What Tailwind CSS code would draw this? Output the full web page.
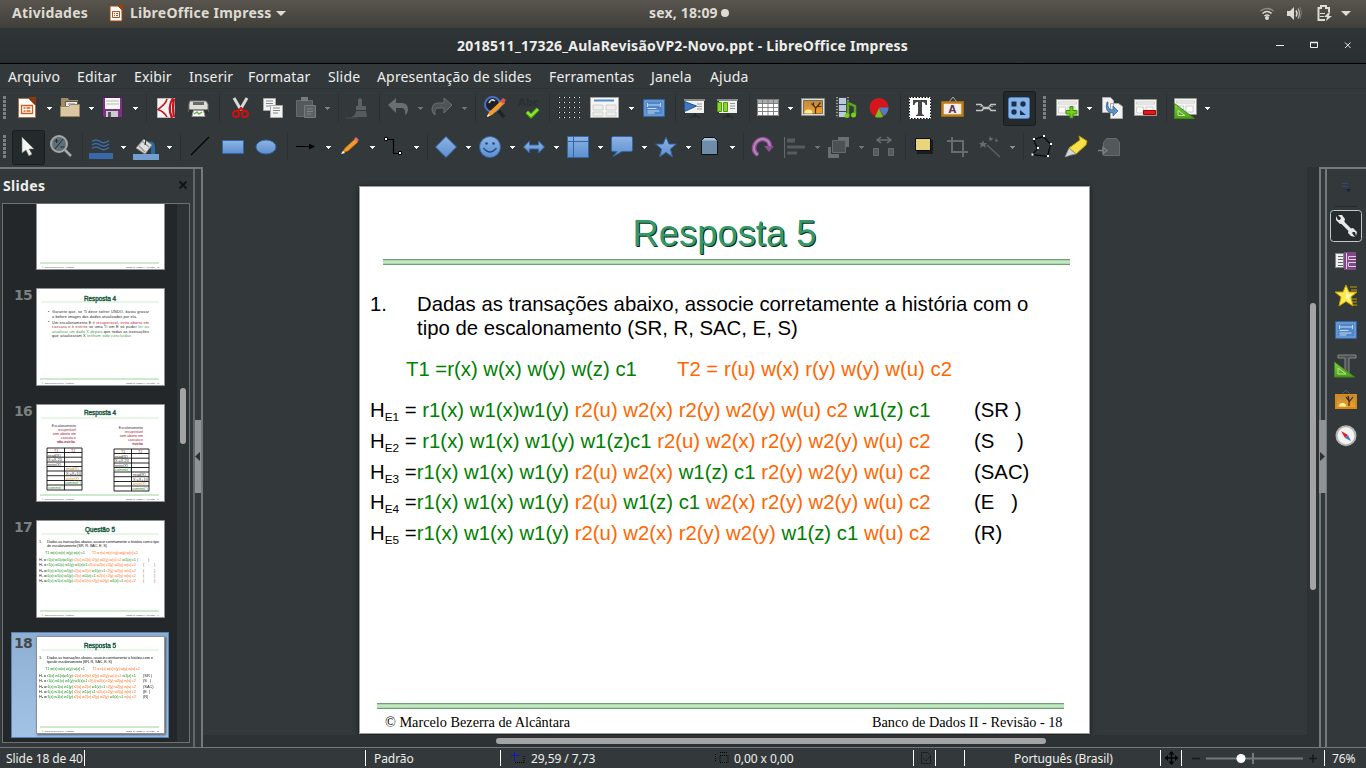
<!DOCTYPE html>
<html lang="pt-BR">
<head>
<meta charset="utf-8">
<title>LibreOffice Impress</title>
<script src="https://cdn.jsdelivr.net/npm/@tailwindcss/browser@4"></script>
</head>
<body class="w-[1366px] h-[768px] overflow-hidden bg-[#33393b] font-['Noto_Sans','Open_Sans',sans-serif] text-[#eeeeec] flex flex-col">

<svg class="absolute w-0 h-0">
  <defs>
    <linearGradient id="bl" x1="0" y1="0" x2="0" y2="1"><stop offset="0" stop-color="#8db4e4"/><stop offset="1" stop-color="#5d8fd0"/></linearGradient>
    <linearGradient id="sky" x1="0" y1="0" x2="0" y2="1"><stop offset="0" stop-color="#b98a4a"/><stop offset="1" stop-color="#f6a21c"/></linearGradient>
    <linearGradient id="gr" x1="0" y1="0" x2="0" y2="1"><stop offset="0" stop-color="#83d04a"/><stop offset="1" stop-color="#4e9a1c"/></linearGradient>
    <path id="ar" d="M0 0h5v1h-1v1h-1v1h-1v-1h-1v-1h-1z"/>
    <path id="grip" fill="#7b8082" d="M0 0h3v3h-3zM0 4h3v3h-3zM0 8h3v3h-3zM0 12h3v3h-3zM0 16h3v3h-3zM0 20h3v3h-3z"/>
    <path id="sep" d="M.5 2v28" stroke="#2b3032"/>
    <g id="page"><path d="M0 0h22v16h-22z" fill="#f4f4f3" stroke="#999b98"/><path d="M2 2.500h18v2h-18zM2 7.500h7v6h-7zM11.500 7.500h7v6h-7z" fill="#fafafa" stroke="#cfd1ce"/></g>
    <g id="tree"><path d="M0 0h23v17h-23z" fill="#ddddd9" stroke="#8b8d88"/><path d="M2 2h19v13h-19z" fill="url(#sky)" stroke="#4a3b26" stroke-width=".6"/><path d="M3 15a4 4 0 0 1 8 0z" fill="#ffee9c"/><path d="M14 15V9L10 5M14 10l5-6M12 7V4M16 8l4 0" stroke="#4a2d12" stroke-width="1.200" fill="none"/></g>
    <g id="dia"><path d="M0 0h21v17h-21z" fill="#4f86c9" stroke="#3465a4"/><path d="M1.500 1.500h18v14h-18z" fill="none" stroke="#85aee0" stroke-width=".8"/><path d="M4 3.500v4m13-4v4M4 5.500h13M4 9h9M4 11.500h12M4 13.500h7" stroke="#d7e5f6" fill="none" stroke-width=".9"/></g>
  </defs>
</svg>

<!-- desktop bar -->
<header class="h-7 shrink-0 bg-linear-to-b from-[#59554e] to-[#403f3a] flex items-center text-[#dfdbd2] text-[14px] font-bold leading-[26px] [&>div]:h-7">
  <div class="w-[108px] pl-3 tracking-[0.25px]">Atividades</div>
  <svg class="w-[22px] h-7 shrink-0" fill="none"><path d="M2 6h8l4 4v11h-12z" fill="#fff" stroke="#a33e03"/><path d="M9 5h6v6z" fill="#a33e03"/><path d="M4.500 11.500h7v6h-7zM6 13.500h1m1 0h2m-4 2h1m1 0h2" stroke="#b8501a"/></svg>
  <div class="w-[146px] tracking-[0.25px] whitespace-nowrap">LibreOffice Impress</div>
  <svg class="w-[373px] h-7 shrink-0" fill="#dfdbd2"><path d="M0 11h10l-5 5z"/></svg>
  <div class="w-[72px] tracking-[0.2px] whitespace-nowrap">sex, 18:09</div>
  <svg class="w-[537px] h-7 shrink-0" fill="#dfdbd2"><circle cx="4" cy="13" r="4"/></svg>
  <svg class="w-[100px] h-7 shrink-0" fill="none"><g stroke="#dfdbd2" stroke-width="1.500"><path d="M2.500 11q6.500-5 13 0" stroke="#8d8a82"/><path d="M4.500 13.500q4.500-4 9 0M6.500 16q2.500-2 5 0"/></g><circle cx="9" cy="18" r="2" fill="#dfdbd2"/>
  <path d="M29 11h3l4-4v13l-4-4h-3z" fill="#dfdbd2"/><path d="M38 10.500q2 3 0 6" stroke="#dfdbd2" stroke-width="1.500"/><path d="M40 8.500q3 5 0 10" stroke="#b5b2aa" stroke-width="1.300"/><path d="M42 7q3 6 0 12" stroke="#7d7a72"/>
  <path d="M67 20h-6.500V8h2.500V6h5v2h3v4" stroke="#dfdbd2" stroke-width="2"/><path d="M62 13.500h5M62 16.500h4" stroke="#dfdbd2"/><path d="M71 12l-5 5h3l-1 4 6-5h-3l1-4z" fill="#dfdbd2"/><path d="M83 11h10l-5 5z" fill="#dfdbd2"/></svg>
</header>

<!-- window title -->
<div class="h-9 shrink-0 bg-linear-to-b from-[#2f3537] to-[#2a2f31] border-b border-black flex items-center">
  <div class="w-[1270px] pl-[457px] text-[14px] font-bold tracking-[0.26px] whitespace-nowrap leading-8">2018511_17326_AulaRevisãoVP2-Novo.ppt - LibreOffice Impress</div>
  <svg class="w-24 h-8 shrink-0" fill="none" stroke="#eeeeec"><path d="M6 15.500h8"/><path d="M40.500 12.500h7v5h-7z"/><path d="M40 12.500h8" stroke-width="1.500"/><path d="M75 12.500l5.500 5.500m0-5.500l-5.500 5.500"/></svg>
</div>

<!-- menu -->
<nav class="h-[25px] shrink-0 border-b border-[#2d3234] pl-2 flex text-[14px] tracking-[0.16px] leading-[26px] whitespace-nowrap">
  <span class="w-[69px]">Arquivo</span><span class="w-[57px]">Editar</span><span class="w-[55px]">Exibir</span><span class="w-[59px]">Inserir</span><span class="w-20">Formatar</span><span class="w-[49px]">Slide</span><span class="w-[172px]">Apresentação de slides</span><span class="w-[102px]">Ferramentas</span><span class="w-[59px]">Janela</span><span>Ajuda</span>
</nav>

<!-- standard toolbar -->
<div class="h-[38px] shrink-0 pt-[3px] flex [&>svg]:h-8 [&>svg]:shrink-0 [&>svg]:overflow-visible [&>svg]:fill-none">
  <svg class="w-4"><use href="#grip" x="3" y="4"/></svg>
  <svg class="w-[42px]"><path d="M2.500 6.500h10l7 7v12h-17z" fill="#fff" stroke="#a9704e"/><path d="M12 5h8v8z" fill="#8a3a0c"/><path d="M5.500 13.500h11v8h-11zM7.500 16h2m1 0h4m-7 3h2m1 0h4" stroke="#d35c17" stroke-width="1.300"/><use href="#ar" x="31" y="15" fill="#fff"/></svg>
  <svg class="w-[42px]"><path d="M3 6h7l1 2h9v10h-17z" fill="#a58b63"/><path d="M7.500 9.500h12v8h-12z" fill="#eee" stroke="#555"/><path d="M10 12h7" stroke="#777"/><path d="M2.500 14.500h8l2-2h9v12h-19z" fill="#d9c6a2" stroke="#9b845c"/><use href="#ar" x="31" y="15" fill="#fff"/></svg>
  <svg class="w-[46px]"><path d="M2.500 5.500h20v20h-18l-2-2z" fill="#75387b" stroke="#4c2055"/><path d="M5 6h15v11h-15z" fill="#f5f5f5"/><path d="M6 9h13m-13 3h13" stroke="#bbb"/><path d="M6 19h12v6h-12z" fill="#ccc"/><path d="M8 20h3v5h-3z" fill="#555"/><use href="#ar" x="33" y="15" fill="#fff"/></svg>
  <svg class="w-[9px]"><use href="#sep"/></svg>
  <svg class="w-8"><path d="M2.500 6.500h17v19h-17z" fill="#f3f3f3" stroke="#bbb"/><path d="M12 7C11 12 6 15 3 17.500C7 19 10 21 12 25" stroke="#c4161c" stroke-width="1.500"/><path d="M18 6Q12 15 17 26M19 7Q17 15 19 25" stroke="#c4161c" stroke-width="2.200"/></svg>
  <svg class="w-[33px]"><path d="M3 9h16l2 3v8h-19v-8z" fill="#dededb" stroke="#777"/><path d="M6 10h11v3h-11z" fill="#6a6b69"/><path d="M2 17.500h19v4h-19z" fill="#333"/><path d="M6.500 18.500h10l1.500 6h-13z" fill="#fff" stroke="#999"/><path d="M7 22l3-2 2 2 3-2" stroke="#6ab04a" stroke-width="1.500"/></svg>
  <svg class="w-2.5"><use href="#sep" x="-1"/></svg>
  <svg class="w-[33px]"><path d="M4 6l7 12M17 6l-7 12" stroke="#d9dad7" stroke-width="3"/><circle cx="6" cy="22" r="3" stroke="#cc1111" stroke-width="2"/><circle cx="15" cy="22" r="3" stroke="#cc1111" stroke-width="2"/><path d="M8 19l3-3 3 3" stroke="#cc1111" stroke-width="2"/></svg>
  <svg class="w-[33px]"><path d="M.500 6.500h12v12h-12z" fill="#f3f3f2" stroke="#aaa"/><path d="M3 9h7m-7 2.500h7m-7 2.500h5" stroke="#888"/><path d="M7.500 13.500h12v12h-12z" fill="#f3f3f2" stroke="#aaa"/><path d="M10 16h7m-7 2.500h7m-7 2.500h5" stroke="#888"/></svg>
  <svg class="w-[42px]"><path d="M.500 8.500h16v16h-16z" fill="#54595b" stroke="#666b6d"/><path d="M5 5h7v4h-7z" fill="#777b7d"/><path d="M8.500 13.500h11v12h-11z" fill="#5d6264" stroke="#777b7d"/><path d="M11 17h6m-6 2.500h6m-6 2.500h4" stroke="#7f8385"/><use href="#ar" x="29" y="15" fill="#7f8385"/></svg>
  <svg class="w-2"><use href="#sep"/></svg>
  <svg class="w-[33px]"><path d="M12 8q2-4 4 0v6h4v4h-10v-4h2z" fill="#5c6163"/><path d="M10 19h10l1 6h-16q5-2 5-6z" fill="#565b5d"/><path d="M0 26h12" stroke="#4a4f51"/></svg>
  <svg class="w-[9px]"><use href="#sep"/></svg>
  <svg class="w-[43px]"><path d="M0 13l8-7v5h6q6 0 6 7 0 3-3 5 1-8-4-7h-5v5z" fill="#696e70"/><use href="#ar" x="30" y="15" fill="#6f7476"/></svg>
  <svg class="w-[44px]"><path d="M21 13l-8-7v5h-6q-6 0-6 7 0 3 3 5-1-8 4-7h5v5z" fill="#4e5355" stroke="#6a6f71"/><use href="#ar" x="31" y="15" fill="#6f7476"/></svg>
  <svg class="w-[9px]"><use href="#sep"/></svg>
  <svg class="w-[34px]"><path d="M13 17l7 8" stroke="#222" stroke-width="3.500"/><circle cx="8.500" cy="12.500" r="7.500" fill="#1e2224" stroke="#4871c4" stroke-width="2"/><path d="M5 11q2-5 6-2" stroke="#ddd" stroke-width="1.500"/><path d="M3 25l2-5 13-12 3 3-13 12z" fill="#f39c2b"/><path d="M16 9l3-3 3 2-3 4z" fill="#e05252"/><path d="M3 25l1-3 2 1.500z" fill="#fff"/></svg>
  <svg class="w-[31px]"><text x="0" y="14" font-family="DejaVu Sans" font-weight="bold" font-size="10" fill="#2a2f31" textLength="21">Abc</text><path d="M9 20l4 4 7-7" stroke="#3e8a08" stroke-width="4.500"/><path d="M9 20l4 4 7-7" stroke="#8ae234" stroke-width="2.500"/></svg>
  <svg class="w-[9px]"><use href="#sep"/></svg>
  <svg class="w-8"><path d="M0 5.500h23M0 10.500h23M0 15.500h23M0 20.500h23M0 25.500h23" stroke="#111" stroke-dasharray="1 4"/><path d="M1 5.500h22M1 10.500h22M1 15.500h22M1 20.500h22M1 25.500h22" stroke="#fff" stroke-dasharray="1 4"/></svg>
  <svg class="w-[53px]"><path d="M.500 5.500h28v20h-28z" fill="#f6f6f5" stroke="#a5a7a4"/><path d="M4 8.500h20" stroke="#5b8bcc" stroke-width="2"/><path d="M3 13h10v5h-10zM16 13h10v5h-10zM3 20h10v4h-10zM16 20h10v4h-10z" fill="#eee" stroke="#d0d0ce"/><use href="#ar" x="39" y="15" fill="#fff"/></svg>
  <svg class="w-8"><use href="#dia" x=".5" y="7.500"/></svg>
  <svg class="w-[9px]"><use href="#sep"/></svg>
  <svg class="w-8"><path d="M1 8h19v13h-19z" fill="#f1f1f0"/><path d="M0 8h21" stroke="#8a8c89" stroke-width="2"/><path d="M13 12h5m-5 2.500h5m-5 2.500h5" stroke="#999"/><path d="M.500 9.500l12 4.500-12 5.500z" fill="#3f78bd" stroke="#24518a"/><path d="M6 26l5-3 5 3m-5-5v5" stroke="#222"/></svg>
  <svg class="w-[33px]"><path d="M3 8h18v13h-18z" fill="#f1f1f0"/><path d="M1 8h21" stroke="#8a8c89" stroke-width="2"/><path d="M14 11.500h5m-5 2.500h5m-5 2.500h5" stroke="#999"/><path d="M1.500 10.500h4v9h-4zM7.500 10.500h4v9h-4z" fill="#8ad432" stroke="#4e9a06"/><path d="M7 26l5-3 5 3m-5-5v5" stroke="#222"/></svg>
  <svg class="w-2"><use href="#sep"/></svg>
  <svg class="w-[44px]"><path d="M0 7h22v17h-22z" fill="#fff"/><path d="M0 7h22v5h-22z" fill="#aaaca9"/><path d="M.500 7.500h21v16h-21zM0 11.500h22M0 15.500h22M0 19.500h22M5.500 7v17M11 7v17M16.500 7v17" stroke="#777a77" stroke-width=".9"/><use href="#ar" x="31" y="15" fill="#fff"/></svg>
  <svg class="w-[34px]"><use href="#tree" x=".5" y="6.500"/></svg>
  <svg class="w-8"><path d="M1 5h13v21h-13z" fill="#444"/><path d="M4 6h7v6h-7zM4 13h7v6h-7zM4 20h7v5h-7z" fill="#b8cbe0"/><path d="M2 5v21m11-21v21" stroke="#eee" stroke-dasharray="1 2"/><path d="M13 23v-12l7 3v9" stroke="#58a516" stroke-width="2.500"/><circle cx="12" cy="23.500" r="2.500" fill="#73d216"/><circle cx="18.500" cy="23" r="2.500" fill="#73d216"/></svg>
  <svg class="w-[33px]"><circle cx="12" cy="15.500" r="9.500" fill="#d8151a"/><path d="M12 15.500h9.500a10 10 0 0 1-5 8.500z" fill="#4b7fc4"/><path d="M12 16l4 9q-4 1-8 0z" fill="#73c02a"/></svg>
  <svg class="w-[9px]"><use href="#sep"/></svg>
  <svg class="w-8"><path d="M0 5h22v22h-22z" fill="#fff"/><path d="M.500 5.500h21v21h-21z" stroke="#000" stroke-dasharray="1.500 1.500"/><path d="M4 8h14v5h-1.500q-.5-3-3-3h-.5v11q0 2 2 2v1h-8v-1q2 0 2-2v-11h-.5q-2.500 0-3 3h-1.500z" fill="#454746"/></svg>
  <svg class="w-[34px]"><path d="M8 10l4-5 4 5" stroke="#aaa"/><path d="M1.500 10.500h20v13h-20z" fill="#f7efe8" stroke="#c17d11" stroke-width="2.500"/><text x="7.500" y="21" font-family="DejaVu Sans" font-weight="bold" font-size="10" fill="#5c3566">A</text></svg>
  <svg class="w-7"><path d="M1 12.500h5l2.500 3h5l2.500-3h5M1 18.500h6l1.500-2h6l1.500 2h5" stroke="#c3c5c2" stroke-width="1.600"/><path d="M5 14.500h4m5 0h4" stroke="#8a8c8a"/></svg>
  <svg class="w-[40px]"><rect x=".5" y="-.5" width="32" height="34" rx="2" fill="#24292b" stroke="#191d1f"/><rect x="5.500" y="5.500" width="21" height="21" rx="2" fill="#8ab4e8" stroke="#4a7fc2"/><path d="M8.500 9.500h5v5h-5zM17 18l6 5h-6z" fill="#16324f"/><circle cx="20" cy="12" r="2.700" fill="#16324f"/><circle cx="11" cy="20" r="2.700" fill="#16324f"/></svg>
  <svg class="w-[13px]"><use href="#grip" y="4"/></svg>
  <svg class="w-[45px]"><use href="#page" x=".5" y="7.500"/><path d="M14 14.500h3v4h4v3.500h-4v4h-3v-4h-4v-3.500h4z" fill="#73d216" stroke="#3e8a08"/><use href="#ar" x="31" y="15" fill="#fff"/></svg>
  <svg class="w-[33px]"><path d="M1.500 5.500h8l3 3v12h-11zM9.500 11.500h8l4 3v12h-12z" fill="#f1f1f0" stroke="#aaa"/><path d="M7 10q-1 8 5 8v-4l5 5-5 5v-3q-9 0-6-11z" fill="#5f92c4" stroke="#2d5e94" stroke-width=".7"/></svg>
  <svg class="w-8"><use href="#page" x=".5" y="7.500"/><path d="M9.500 18.500h12v4h-12z" fill="#e01b1b" stroke="#a40000"/></svg>
  <svg class="w-2"><use href="#sep"/></svg>
  <svg class="w-10"><use href="#page" x=".5" y="6.500"/><path d="M.500 26.500V11.500l20 15z" fill="url(#gr)" stroke="#3f8a12"/><path d="M4 23.500v-5l7 5z" stroke="#b7ea85"/><use href="#ar" x="31" y="15" fill="#fff"/></svg>
</div>

<!-- drawing toolbar -->
<div class="h-[40px] shrink-0 pt-[4px] flex [&>svg]:h-8 [&>svg]:shrink-0 [&>svg]:overflow-visible [&>svg]:fill-none">
  <svg class="w-3"><use href="#grip" x="3" y="4"/></svg>
  <svg class="w-[38px]"><rect x=".5" y="-.5" width="32" height="34" rx="2" fill="#24292b" stroke="#191d1f"/><path d="M10 6v16l4-3 3 6 3-2-3-5h5z" fill="#f4f4f3" stroke="#777" stroke-width=".6"/></svg>
  <svg class="w-8"><circle cx="9" cy="13" r="8" fill="#5f6f78" stroke="#a5a8a8" stroke-width="2"/><path d="M4.500 10h4m-2-2v4m4 4h4M5 18l8-10" stroke="#1f2c35"/><path d="M15 19l6 6" stroke="#aaa" stroke-width="2.500"/></svg>
  <svg class="w-[7px]"><use href="#sep"/></svg>
  <svg class="w-[44px]"><path d="M3 10.500q4-3 8 0t9-1M3 14q4-3 8 0t9-1M3 17.500q4-3 8 0t9-1" stroke="#3b6da8" stroke-width="1.500"/><path d="M0 22h24v6h-24z" fill="#3768ab"/><use href="#ar" x="32" y="15" fill="#fff"/></svg>
  <svg class="w-[47px]"><path d="M15 11q6-2 7 4v8h-4v-7z" fill="#2a6a9c"/><path d="M3 17l8-9 8 6-7 9z" fill="#e0e0de" stroke="#888"/><path d="M6 15l6 6M9 10l7 6" stroke="#999" stroke-width="1.500"/><path d="M12 14l1-5-2-2" stroke="#222"/><path d="M0 23h26v6h-26z" fill="#729fcf"/><use href="#ar" x="34" y="15" fill="#fff"/></svg>
  <svg class="w-2.5"><use href="#sep"/></svg>
  <svg class="w-8"><path d="M1 24l18-18" stroke="#000" stroke-width="1.100"/></svg>
  <svg class="w-[33px]"><path d="M.500 9.500h21v13h-21z" fill="url(#bl)" stroke="#3465a4"/></svg>
  <svg class="w-8"><ellipse cx="11" cy="16" rx="10" ry="7" fill="url(#bl)" stroke="#3465a4"/></svg>
  <svg class="w-2"><use href="#sep"/></svg>
  <svg class="w-[46px]"><path d="M1 15.500h14" stroke="#000"/><path d="M14 12.500l6 3-6 3z" fill="#000"/><use href="#ar" x="31" y="15" fill="#fff"/></svg>
  <svg class="w-[43px]"><path d="M1 22l3-5 10-9 3 3-10 9-6 2z" fill="#f39c2b" stroke="#a8600c" stroke-width=".6"/><path d="M13 8l2-2 3 3-2 2z" fill="#e66b6b"/><path d="M0 23l2-3 2 2z" fill="#fff"/><use href="#ar" x="29" y="15" fill="#fff"/></svg>
  <svg class="w-[43px]"><path d="M2 8.500h7.500v14h8" stroke="#000" stroke-width="1.200"/><path d="M.500 6.500h3v3h-3zM14.500 20.500h3v3h-3z" fill="#fff" stroke="#000"/><use href="#ar" x="30" y="15" fill="#fff"/></svg>
  <svg class="w-2"><use href="#sep"/></svg>
  <svg class="w-11"><path d="M11 5.500l10.500 10.500-10.500 10.500-10.500-10.500z" fill="url(#bl)" stroke="#3465a4"/><use href="#ar" x="31" y="15" fill="#fff"/></svg>
  <svg class="w-11"><circle cx="11" cy="16" r="10.500" fill="url(#bl)" stroke="#3465a4"/><circle cx="7.500" cy="12.500" r="1.300" fill="#204a87"/><circle cx="14.500" cy="12.500" r="1.300" fill="#204a87"/><path d="M4.500 17q6.500 8 13 0" stroke="#204a87" stroke-width="1.300"/><use href="#ar" x="31" y="15" fill="#fff"/></svg>
  <svg class="w-11"><path d="M.500 16l6-6v4h9v-4l6 6-6 6v-4h-9v4z" fill="url(#bl)" stroke="#3465a4"/><use href="#ar" x="31" y="15" fill="#fff"/></svg>
  <svg class="w-11"><path d="M.500 5.500h21v21h-21zM6.500 5.500v21M0 10.500h22" fill="url(#bl)" stroke="#3465a4"/><use href="#ar" x="31" y="15" fill="#fff"/></svg>
  <svg class="w-11"><path d="M2 5.500h18q1.500 0 1.500 1.500v12q0 1.500-1.500 1.500h-9l-9 5 4-5h-4q-1.500 0-1.500-1.500v-12q0-1.500 1.500-1.500z" fill="url(#bl)" stroke="#3465a4"/><use href="#ar" x="31" y="15" fill="#fff"/></svg>
  <svg class="w-11"><path d="M11 6l3 7h7.500l-6 5 2 8-6.500-4.500-6.500 4.500 2-8-6-5h7.500z" fill="url(#bl)" stroke="#2f5d98"/><use href="#ar" x="31" y="15" fill="#fff"/></svg>
  <svg class="w-[44px]"><path d="M2.500 9.500l3-3h10l3 3v14h-16z" fill="#6f8ca8" stroke="#111"/><path d="M3 9.500l2.500-2.500h9.500l2.500 2.500z" fill="#a9c4de"/><use href="#ar" x="31" y="15" fill="#fff"/></svg>
  <svg class="w-[9px]"><use href="#sep"/></svg>
  <svg class="w-8"><path d="M6 24q-6-4-3-11 3-5 8-5 7 1 7 8" stroke="#8f4f92" stroke-width="4.500"/><path d="M6 24q-6-4-3-11 3-5 8-5 7 1 7 8" stroke="#bb86bd" stroke-width="1.800"/><path d="M12 15h10l-5 6z" fill="#8f4f92"/></svg>
  <svg class="w-11"><path d="M.500 6v21" stroke="#666b6d"/><path d="M3 7.500h8v4h-8zM3 14.500h18v3h-18zM3 20.500h10v3h-10z" fill="#565b5d"/><use href="#ar" x="31" y="15" fill="#6f7476"/></svg>
  <svg class="w-[45px]"><path d="M10 6h11v10h-4v-6h-7zM0 16h3v7h8v4h-11z" fill="#6a6f71"/><path d="M4.500 9.500h13v12h-13z" fill="#4c5153" stroke="#666b6d"/><use href="#ar" x="31" y="15" fill="#6f7476"/></svg>
  <svg class="w-8"><path d="M4 9h14M8 6l-4 3 4 3m6-6l4 3-4 3" stroke="#6a6f71" stroke-width="1.500"/><path d="M.500 17.500h5v7h-5zM15.500 17.500h5v7h-5z" fill="#565b5d" stroke="#666b6d"/></svg>
  <svg class="w-2"><use href="#sep"/></svg>
  <svg class="w-[34px]"><path d="M4 9h16v14h-16z" fill="#1a1d1f"/><path d="M2.500 7.500h15v12h-15z" fill="#ead47a" stroke="#0a0a0a"/></svg>
  <svg class="w-8"><path d="M5 6v15h16M0 10h16v16" stroke="#676c6e" stroke-width="2"/></svg>
  <svg class="w-[44px]"><path d="M8 14l13 12" stroke="#5c6163" stroke-width="1.500"/><path d="M4 9l1 3h3l-2 2 1 3-3-2-3 2 1-3-2-2h3zM11 5l1 2 2 0-1 2-2 1-1-2zM17 7l1 2 1 0-1 2-2-1z" fill="#676c6e"/><use href="#ar" x="31" y="15" fill="#8a8e90"/></svg>
  <svg class="w-2"><use href="#sep"/></svg>
  <svg class="w-[34px]"><path d="M1.500 23.500l5-6-4-9 10-3 7 8-3 12z" stroke="#000" stroke-width="1.100"/><path d="M.5 22.500h2v2h-2zM6 16h2v2h-2zM2 7h2v2h-2zM12 4h2v2h-2zM19 12h2v2h-2zM16 24h2v2h-2z" fill="#fff"/></svg>
  <svg class="w-[33px]"><path d="M4 17l11-8-1-4 8 5-1 4-10 9z" fill="#f8e04a" stroke="#b99a0a"/><path d="M0 26l4-9 7 6-5 1z" fill="#d8d9d6" stroke="#888" stroke-width=".7"/></svg>
  <svg class="w-8"><path d="M5.500 11.500l3-4h10l3 4v13h-16z" fill="#53585a" stroke="#666b6d"/><path d="M0 19.500h6m-1-3l4 3-4 3z" stroke="#7a7e80" stroke-width="1.500"/></svg>
</div>

<!-- work area -->
<main class="h-[580px] shrink-0 flex">

  <section class="w-[203px] shrink-0 flex border-t-2 border-[#747a7c]">
    <div class="w-[195px] border-r-2 border-[#62686a] pl-[2px]">
      <div class="h-[34px] flex items-center text-[14px] font-bold pl-px">
        <span class="w-[174px] tracking-[0.35px] pb-[2px]">Slides</span>
        <svg class="w-4 h-4" stroke="#111415" stroke-width="2" fill="none"><path d="M2.500 3.500l7 7m0-7l-7 7"/></svg>
      </div>
      <div class="w-[188px] h-[540px] border border-[#6c7274] bg-[#232729] flex overflow-hidden">
        <div class="w-[174px] flex flex-col [&_svg]:overflow-visible text-[#7c8081]" >
          <div class="h-[77px] shrink-0 flex pl-[33px]">
            <svg class="w-[130px] h-[66px]"><path d="M.500-2h128v67.500h-128z" fill="#fff" stroke="#8e9293"/><path d="M4 59h119" stroke="#cfe9cf" stroke-width="2"/><g font-family="Liberation Serif" font-size="2.600" fill="#333"><text x="6" y="63.500" textLength="32">© Marcelo Bezerra de Alcântara</text><text x="90" y="63.500" textLength="33">Banco de Dados II - Revisão - 14</text></g></svg>
          </div>
          <div class="h-[116px] shrink-0 flex pt-[6px]">
            <span class="w-[33px] pl-[11px] text-[14px] font-bold font-['DejaVu_Sans'] leading-4 tracking-[-0.8px]">15</span>
            <svg class="w-[130px] h-[98px] mt-px"><path d="M.500.500h128v97h-128z" fill="#fff" stroke="#8e9293"/><path d="M5 14h118" stroke="#cfeecf"/><path d="M4 91h119" stroke="#cfe9cf" stroke-width="2"/><text x="48" y="12.500" font-family="Liberation Sans" font-size="6.400" fill="#1d5b42" stroke="#1d5b42" stroke-width=".4" textLength="32">Resposta 4</text>
            <g font-family="Liberation Sans" font-size="3.800" fill="#222"><text x="12" y="25">•</text><text x="16" y="25" textLength="97">Garante que, se Ti deve sofrer UNDO, basta gravar</text><text x="16" y="29.600" textLength="85">a before images dos dados atualizados por ela.</text><text x="12" y="35">•</text><text x="16" y="36" textLength="97">Um escalonamento E <tspan fill="#b02030">é recuperável, evita aborto em</tspan></text><text x="16" y="40.300" textLength="97"><tspan fill="#b02030">cascata e é estrito</tspan> se uma Ti em E só puder <tspan fill="#3a9a3a">ler ou</tspan></text><text x="16" y="44.600" textLength="97"><tspan fill="#3a9a3a">atualizar um dado X depois</tspan> que todas as transações</text><text x="16" y="49" textLength="79">que atualizaram X <tspan fill="#3a9a3a">tenham sido concluídas</tspan></text></g>
            <g font-family="Liberation Serif" font-size="2.600" fill="#333"><text x="6" y="95.500" textLength="32">© Marcelo Bezerra de Alcântara</text><text x="90" y="95.500" textLength="33">Banco de Dados II - Revisão - 15</text></g></svg>
          </div>
          <div class="h-[116px] shrink-0 flex pt-[6px]">
            <span class="w-[33px] pl-[11px] text-[14px] font-bold font-['DejaVu_Sans'] leading-4 tracking-[-0.8px]">16</span>
            <svg class="w-[130px] h-[98px] mt-px"><path d="M.500.500h128v97h-128z" fill="#fff" stroke="#8e9293"/><path d="M5 14h118" stroke="#cfeecf"/><path d="M4 91h119" stroke="#cfe9cf" stroke-width="2"/><text x="48" y="11" font-family="Liberation Sans" font-size="6.400" fill="#1d5b42" stroke="#1d5b42" stroke-width=".4" textLength="32">Resposta 4</text>
            <g font-family="Liberation Sans" font-size="3.500" text-anchor="end" fill="#a02030"><text x="40" y="23" fill="#333">Escalonamento</text><text x="40" y="27">recuperável</text><text x="40" y="30.500">sem aborto em</text><text x="40" y="34.500">cascata e</text><text x="39" y="38.500" font-weight="bold">não-estrito</text><text x="107" y="25" fill="#333">Escalonamento</text><text x="107" y="29">recuperável</text><text x="107" y="32.500">sem aborto em</text><text x="107" y="36.500">cascata e</text><text x="107" y="40.500" font-weight="bold">estrito</text></g>
            <path d="M11 44h35v42h-35zM28.500 44v42M11 48.500h35M11 53.200h35M11 58h35M11 62.500h35M11 67h35M11 71.700h35M11 76.500h35M11 81h35M78 45h35v42h-35zM95.500 45v42M78 49.500h35M78 54.200h35M78 59h35M78 63.500h35M78 68h35M78 72.700h35M78 77.500h35M78 82h35" fill="none" stroke="#111" stroke-width=".9"/>
            <g font-family="Liberation Sans" font-size="3.800" fill="#333"><text x="18" y="48" fill="#b02030">T1</text><text x="35" y="48" fill="#b02030">T2</text><text x="12" y="52.500">read(X)</text><text x="12" y="57">X:=X-20</text><text x="12" y="62">write(X)</text><text x="30" y="66" fill="#b08a20">read(X)</text><text x="30" y="71">X:=X+10</text><text x="30" y="76" fill="#e09a20">write(X)</text><text x="29" y="80" fill="#2a8a3a">commit( )</text><text x="12" y="85" fill="#2a8a3a">commit( )</text><text x="85" y="49" fill="#b02030">T1</text><text x="102" y="49" fill="#b02030">T2</text><text x="79" y="53.500">read(X)</text><text x="79" y="58">X:=X-20</text><text x="79" y="63">write(X)</text><text x="79" y="67" fill="#2a8a3a">commit( )</text><text x="97" y="72">read(X)</text><text x="97" y="77">X:=X+10</text><text x="97" y="81" fill="#e09a20">write(X)</text><text x="96" y="86" fill="#2a8a3a">commit( )</text></g>
            <g font-family="Liberation Serif" font-size="2.600" fill="#333"><text x="6" y="95.500" textLength="32">© Marcelo Bezerra de Alcântara</text><text x="90" y="95.500" textLength="33">Banco de Dados II - Revisão - 16</text></g></svg>
          </div>
          <div class="h-[112px] shrink-0 flex pt-[6px]">
            <span class="w-[33px] pl-[11px] text-[14px] font-bold font-['DejaVu_Sans'] leading-4 tracking-[-0.8px]">17</span>
            <svg class="w-[130px] h-[98px] mt-px"><path d="M.500.500h128v97h-128z" fill="#fff" stroke="#8e9293"/><path d="M5 14h118" stroke="#cfeecf"/><path d="M4 91h119" stroke="#cfe9cf" stroke-width="2"/><text x="49" y="12" font-family="Liberation Sans" font-size="6.400" fill="#1d5b42" stroke="#1d5b42" stroke-width=".4" textLength="30">Questão 5</text>
            <g font-family="Liberation Sans" font-size="3.900" fill="#222"><text x="3" y="23">1.</text><text x="11" y="23" textLength="112">Dadas as transações abaixo, associe corretamente a história com o tipo</text><text x="11" y="27" textLength="60">de escalonamento (SR, R, SAC, E, S)</text><text x="9" y="34" fill="#189018" textLength="40">T1 =r(x) w(x) w(y) w(z) c1</text><text x="56" y="34" fill="#ff7420" textLength="46">T2 = r(u) w(x) r(y) w(y) w(u) c2</text>
            <g fill="#189018"><text x="3" y="41" textLength="97"><tspan fill="#222">H₁ = </tspan>r1(x) w1(x)w1(y) <tspan fill="#ff7420">r2(u) w2(x) r2(y) w2(y) w(u) c2</tspan> w1(z) c1</text><text x="3" y="46" textLength="97"><tspan fill="#222">H₂ = </tspan>r1(x) w1(x) w1(y) w1(z)c1 <tspan fill="#ff7420">r2(u) w2(x) r2(y) w2(y) w(u) c2</tspan></text><text x="3" y="52" textLength="97"><tspan fill="#222">H₃ =</tspan>r1(x) w1(x) w1(y) <tspan fill="#ff7420">r2(u) w2(x)</tspan> w1(z) c1 <tspan fill="#ff7420">r2(y) w2(y) w(u) c2</tspan></text><text x="3" y="57" textLength="97"><tspan fill="#222">H₄ =</tspan>r1(x) w1(x) w1(y) <tspan fill="#ff7420">r2(u)</tspan> w1(z) c1 <tspan fill="#ff7420">w2(x) r2(y) w2(y) w(u) c2</tspan></text><text x="3" y="62" textLength="97"><tspan fill="#222">H₅ =</tspan>r1(x) w1(x) w1(y) <tspan fill="#ff7420">r2(u) w2(x) r2(y) w2(y)</tspan> w1(z) c1 <tspan fill="#ff7420">w(u) c2</tspan></text></g>
            <g fill="#a33"><text x="101" y="41">(</text><text x="112" y="41">)</text><text x="107" y="46">(</text><text x="118" y="46">)</text><text x="107" y="52">(</text><text x="118" y="52">)</text><text x="107" y="57">(</text><text x="118" y="57">)</text><text x="107" y="62">(</text><text x="118" y="62">)</text></g></g>
            <g font-family="Liberation Serif" font-size="2.600" fill="#333"><text x="6" y="95.500" textLength="32">© Marcelo Bezerra de Alcântara</text><text x="90" y="95.500" textLength="33">Banco de Dados II - Revisão - 17</text></g></svg>
          </div>
          <div class="w-[158px] h-[106px] ml-2 mt-[7px] shrink-0 flex pt-[2px] border border-[#5583b5] bg-linear-to-b from-[#8fafd2] to-[#a3c3e6] text-[#45484a]">
            <span class="w-[24px] pl-[2px] text-[14px] font-bold font-['DejaVu_Sans'] leading-4 tracking-[-0.8px]">18</span>
            <svg class="w-[130px] h-[98px] mt-px drop-shadow-[1px_1px_1px_#0008]"><path d="M.500.500h128v97h-128z" fill="#fff" stroke="#8e9293"/><path d="M5 14h118" stroke="#cfeecf"/><path d="M4 91h119" stroke="#cfe9cf" stroke-width="2"/><text x="48" y="12" font-family="Liberation Sans" font-size="6.400" fill="#1d5b42" stroke="#1d5b42" stroke-width=".4" textLength="32">Resposta 5</text>
            <g font-family="Liberation Sans" font-size="3.900" fill="#222"><text x="3" y="23">1.</text><text x="11" y="23" textLength="106">Dadas as transações abaixo, associe corretamente a história com o</text><text x="11" y="27" textLength="65">tipo de escalonamento (SR, R, SAC, E, S)</text><text x="9" y="34" fill="#189018" textLength="40">T1 =r(x) w(x) w(y) w(z) c1</text><text x="56" y="34" fill="#ff7420" textLength="48">T2 = r(u) w(x) r(y) w(y) w(u) c2</text>
            <g fill="#189018"><text x="3" y="41" textLength="97"><tspan fill="#222">H₁ = </tspan>r1(x) w1(x)w1(y) <tspan fill="#ff7420">r2(u) w2(x) r2(y) w2(y) w(u) c2</tspan> w1(z) c1</text><text x="3" y="46" textLength="97"><tspan fill="#222">H₂ = </tspan>r1(x) w1(x) w1(y) w1(z)c1 <tspan fill="#ff7420">r2(u) w2(x) r2(y) w2(y) w(u) c2</tspan></text><text x="3" y="52" textLength="97"><tspan fill="#222">H₃ =</tspan>r1(x) w1(x) w1(y) <tspan fill="#ff7420">r2(u) w2(x)</tspan> w1(z) c1 <tspan fill="#ff7420">r2(y) w2(y) w(u) c2</tspan></text><text x="3" y="57" textLength="97"><tspan fill="#222">H₄ =</tspan>r1(x) w1(x) w1(y) <tspan fill="#ff7420">r2(u)</tspan> w1(z) c1 <tspan fill="#ff7420">w2(x) r2(y) w2(y) w(u) c2</tspan></text><text x="3" y="62" textLength="97"><tspan fill="#222">H₅ =</tspan>r1(x) w1(x) w1(y) <tspan fill="#ff7420">r2(u) w2(x) r2(y) w2(y)</tspan> w1(z) c1 <tspan fill="#ff7420">w(u) c2</tspan></text></g>
            <text x="107" y="41">(SR )</text><text x="107" y="46">(S</text><text x="114" y="46">)</text><text x="107" y="52">(SAC)</text><text x="107" y="57">(E</text><text x="113" y="57">)</text><text x="107" y="62">(R)</text></g>
            <g font-family="Liberation Serif" font-size="2.600" fill="#333"><text x="6" y="95.500" textLength="32">© Marcelo Bezerra de Alcântara</text><text x="90" y="95.500" textLength="33">Banco de Dados II - Revisão - 18</text></g></svg>
          </div>
        </div>
        <div class="flex-1 bg-[#2d3234] pt-[184px] pl-[3px]"><div class="w-[6px] h-[56px] rounded-full bg-[#a4a4a4]"></div></div>
      </div>
    </div>
    <svg class="w-2 h-[578px] shrink-0" fill="none"><path d="M7 0v578" stroke="#747a7c" stroke-width="2"/><path d="M-1 251h7v73h-7z" fill="#909394"/><path d="M5 283v9l-5-4.500z" fill="#2b3032"/></svg>
  </section>

  <section class="w-[1104px] shrink-0 flex flex-col">
    <div class="h-[568px] pt-[19px] pl-[156px]">
      <!-- current slide -->
      <article class="w-[731px] h-[548px] bg-white border border-[#9a9c9d] shadow-[0_1px_5px_#0009] text-black font-['Liberation_Sans'] flex flex-col [&_p]:whitespace-pre [&_span]:whitespace-pre">
        <h1 class="mt-[27px] h-10 text-center text-[36.400px] leading-10 text-[#339966] [text-shadow:1px_1px_0_#0d2a1c]">Resposta 5</h1>
        <div class="ml-[23px] mt-[5px] w-[687px] h-[6px] shrink-0 border-y border-[#779a7b] bg-linear-to-b from-[#a0cda2] via-[#cbf5cb] to-[#a0cda2]"></div>
        <div class="mt-[27px] flex text-[20.330px] leading-6 h-12 pl-[10px]"><span class="w-[47px]">1.</span><p>Dadas as transações abaixo, associe corretamente a história com o
tipo de escalonamento (SR, R, SAC, E, S)</p></div>
        <div class="mt-[17px] flex text-[20.340px] leading-6 pl-[46px]"><span class="w-[271px] text-[#008000]">T1 =r(x) w(x) w(y) w(z) c1</span><span class="text-[#ff6600]">T2 = r(u) w(x) r(y) w(y) w(u) c2</span></div>
        <div class="mt-[14.300px] pl-[10px] text-[20.340px] leading-[30.700px] text-[#008000] [&>div]:flex [&>div]:h-[30.700px] [&_i]:not-italic [&_i]:text-black [&_sub]:text-[11.800px] [&_sub]:leading-none [&_sub]:bottom-[-4px] [&_b]:font-normal [&_b]:text-[#ff6600] [&>div>p]:w-[604px] [&>div>span]:text-black">
          <div><p><i>H<sub>E1</sub> = </i>r1(x) w1(x)w1(y) <b>r2(u) w2(x) r2(y) w2(y) w(u) c2</b> w1(z) c1</p><span>(SR )</span></div>
          <div><p><i>H<sub>E2</sub> = </i>r1(x) w1(x) w1(y) w1(z)c1 <b>r2(u) w2(x) r2(y) w2(y) w(u) c2</b></p><span>(S    )</span></div>
          <div><p><i>H<sub>E3</sub> =</i>r1(x) w1(x) w1(y) <b>r2(u) w2(x)</b> w1(z) c1 <b>r2(y) w2(y) w(u) c2</b></p><span>(SAC)</span></div>
          <div><p><i>H<sub>E4</sub> =</i>r1(x) w1(x) w1(y) <b>r2(u)</b> w1(z) c1 <b>w2(x) r2(y) w2(y) w(u) c2</b></p><span>(E   )</span></div>
          <div><p><i>H<sub>E5</sub> =</i>r1(x) w1(x) w1(y) <b>r2(u) w2(x) r2(y) w2(y)</b> w1(z) c1 <b>w(u) c2</b></p><span>(R)</span></div>
        </div>
        <div class="mt-auto ml-[17px] w-[687px] h-[6px] shrink-0 border-y border-[#779a7b] bg-linear-to-b from-[#a0cda2] via-[#cbf5cb] to-[#a0cda2]"></div>
        <footer class="h-6 shrink-0 flex justify-between pl-[25px] pr-[26.500px] font-['Liberation_Serif'] text-[14.270px] leading-[26px]"><span>© Marcelo Bezerra de Alcântara</span><span>Banco de Dados II - Revisão - 18</span></footer>
      </article>
    </div>
    <div class="h-3 bg-[#2d3234] pl-[293px] pt-[3px]"><div class="w-[550px] h-[6px] rounded-full bg-[#a4a4a4]"></div></div>
  </section>

  <div class="w-3 shrink-0 bg-[#2d3234] pt-[136px] pl-[3px]"><div class="w-[6px] h-[287px] rounded-full bg-[#a4a4a4]"></div></div>
  <svg class="w-2 h-[580px] shrink-0" fill="none"><path d="M0 1h8M1 0v580M7 2v578" stroke="#747a7c" stroke-width="2"/><path d="M0 253h7v73h-7z" fill="#909394"/><path d="M1 285v9l5-4.500z" fill="#2b3032"/></svg>

  <aside class="w-[39px] shrink-0 border-t-2 border-[#747a7c] [&>svg]:block [&>svg]:overflow-visible [&>svg]:w-[39px] [&>svg]:fill-none">
    <svg class="h-[38px]"><path d="M15 14.500h6M15 17.500h6" stroke="#2f4a78"/><path d="M19 20h5l-2.500 3z" fill="#16223c"/><path d="M8 37.500h22" stroke="#24292b"/></svg>
    <svg class="h-[38px]"><rect x="3.500" y="3.500" width="31" height="31" rx="3" fill="#272c2e" stroke="#c4c6c7"/><path d="M13 13l12 12" stroke="#e8e8e6" stroke-width="3.500"/><path d="M9 9l0 4 4 4 4-1 1-4-3-4-4 0 3 3-1 2-2 0zM29 29l1-4-4-4-4 1-1 4 3 3 4 1-3-4 1-1 2 0z" fill="#e8e8e6"/></svg>
    <svg class="h-[35px]"><path d="M8.500 8.500h8v14h-8z" fill="#eee" stroke="#888"/><path d="M11 11.500h5m-5 3h5m-5 3h5m-5 3h5" stroke="#666"/><path d="M17 7h12v18h-12z" fill="#7d4a85"/><path d="M19.500 8v16M29 11.500h-7.500v3h7.500M29 17.500h-7.500v4h7.500" stroke="#e2cfe5"/></svg>
    <svg class="h-[35px]"><path d="M23 7h7M24 10h6M25 19h5M24 22h6M25 25h5" stroke="#c4a000"/><path d="M19 5l3 7h8l-6 5 2 9-7-4.500-7 4.500 2-9-6-5h8z" fill="#fce94f" stroke="#c4a000"/><path d="M19 9l2 5h4l-3 3 1 4-4-2.500z" fill="#fff9b0"/></svg>
    <svg class="h-[35px]"><use href="#dia" x="8.500" y="6.500"/></svg>
    <svg class="h-[35px]"><path d="M11 5h18v3h-7v16h-4v-16h-7z" fill="#4d5152" stroke="#888"/><path d="M7.500 27v-15l20 15z" fill="url(#gr)" stroke="#3f8a12"/><path d="M11 24v-6l8 6z" stroke="#b7ea85"/></svg>
    <svg class="h-[35px]"><path d="M15 9l4-4 4 4" stroke="#555a5c"/><path d="M9 10h20v13h-20z" fill="url(#sky)" stroke="#d38a1a" stroke-width="2"/><path d="M12 21.500a3.500 3.500 0 0 1 7 0z" fill="#fff3a8"/><path d="M22 21v-5l-3-4m3 5l4-5M22 15l-1-4" stroke="#3c2410" stroke-width="1.200"/></svg>
    <svg class="h-[35px]"><circle cx="19" cy="15.700" r="9.500" fill="#f3f3f2" stroke="#b4b6b3" stroke-width="2"/><path d="M14 11l7 4-3 3z" fill="#d8232a"/><path d="M24 21l-3-6-3 3z" fill="#4677b8"/></svg>
  </aside>
</main>

<!-- status bar -->
<footer class="h-[21px] shrink-0 border-t border-[#747a7c] flex text-[12px] leading-[21px] tracking-[-0.07px] whitespace-nowrap [&>span]:shrink-0 [&>svg]:shrink-0 [&>svg]:h-5 [&>svg]:fill-none">
  <span class="w-[84px] pl-[6px]">Slide 18 de 40</span>
  <span class="w-[281px] border-l border-white h-4 mt-[2px]"></span>
  <span class="w-[135px] border-l border-white h-4 mt-[2px] pl-2 leading-[17px]">Padrão</span>
  <svg class="w-[31px]"><path d="M.500 2v16" stroke="#fff"/><path d="M11 7.500h8M14.500 4v9" stroke="#1414c8"/><path d="M15 14.500h9M24 8v7" stroke="#000" stroke-dasharray="1 1"/></svg>
  <span class="w-[181px]">29,59 / 7,73</span>
  <svg class="w-[22px]"><path d="M8 4.500h8M3.500 6v8M8 7.500h8v7h-8z" stroke="#000" stroke-dasharray="1 1"/></svg>
  <span class="w-[179px]">0,00 x 0,00</span>
  <svg class="w-[101px]"><path d="M.500 2v16M22.500 2v16M51.500 2v16" stroke="#fff"/><path d="M8.500 4.500h6l3 3v8h-9zM10 10l3 3 4-5" stroke="#1d2123"/></svg>
  <span class="w-[146px]">Português (Brasil)</span>
  <svg class="w-[172px]"><path d="M.500 2v16M21.500 2v16M164.500 2v16" stroke="#fff"/><path d="M5 10h13M11.500 4v12" stroke="#050505" stroke-width="1.500"/><path d="M11.500 3l3 3.500h-6zM11.500 17l3-3.500h-6zM4.500 10l3.500-3v6zM18.500 10l-3.500-3v6z" fill="#050505"/><path d="M32 10.500h8M149 10.500h8M153 6.500v8" stroke="#15191a" stroke-width="1.500"/><path d="M46 10.500h97M93 5v11" stroke="#747a7c" stroke-width="2"/><circle cx="81" cy="10.500" r="4.500" fill="#fff"/></svg>
  <span>76%</span>
</footer>
</body>
</html>
